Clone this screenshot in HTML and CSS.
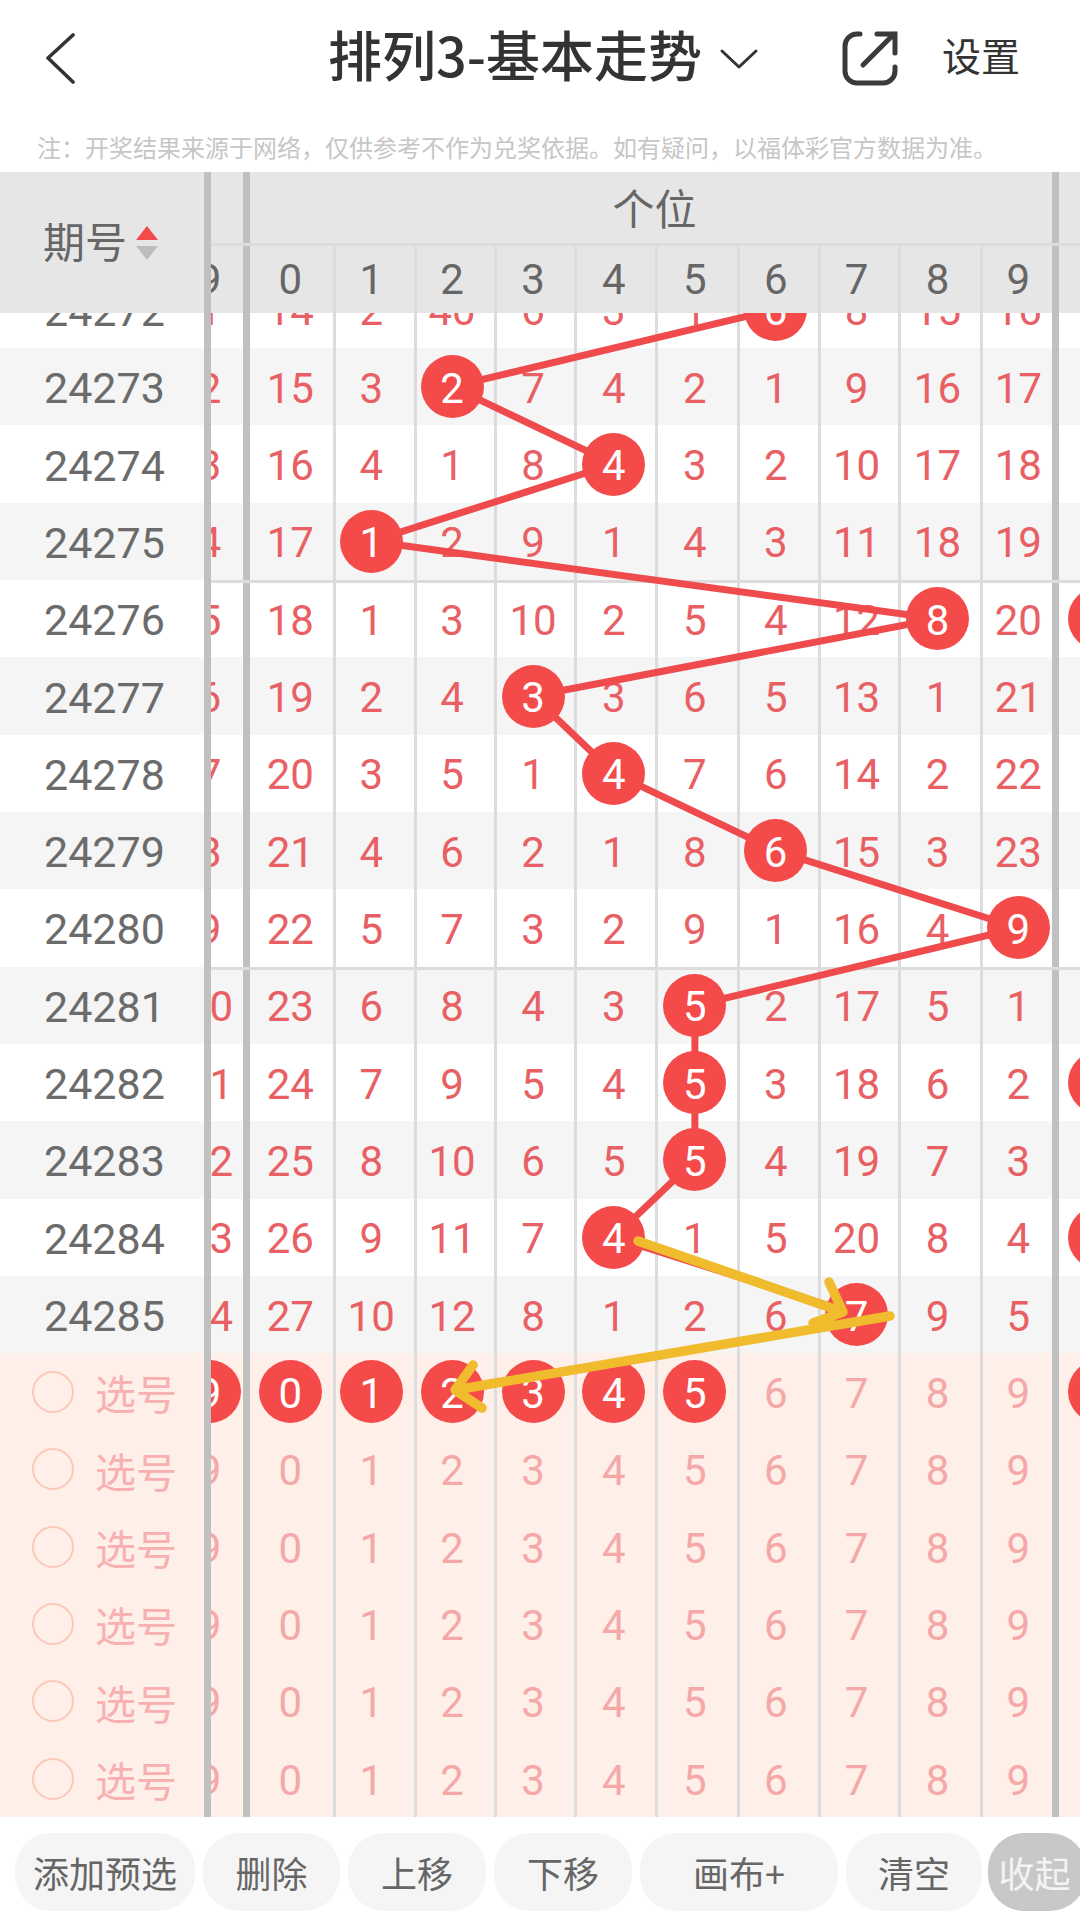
FILE: index.html
```html
<!DOCTYPE html>
<html lang="zh-CN">
<head>
<meta charset="utf-8">
<title>排列3-基本走势</title>
<link rel="stylesheet" href="styles.css">
</head>
<body>
<div class="app">
  <header class="nav">
    <svg class="icon-back" viewBox="0 0 32 52"><polyline points="29,3 4,26 29,50"/></svg>
    <h1 class="title">排列3-基本走势</h1>
    <svg class="icon-down" viewBox="0 0 40 22"><polyline points="3,3 20,19 37,3"/></svg>
    <svg class="icon-share" viewBox="0 0 60 60"><path d="M19 6H16A12 12 0 0 0 4 18V43A12 12 0 0 0 16 55H42A12 12 0 0 0 54 43V39M22 37L53 6M36 6H54V25"/></svg>
    <span class="setting">设置</span>
  </header>
  <p class="note">注：开奖结果来源于网络，仅供参考不作为兑奖依据。如有疑问，以福体彩官方数据为准。</p>

  <section class="thead">
    <div class="thead-left">
      <span class="thead-title">期号</span>
      <span class="sort"><i class="up"></i><i class="down"></i></span>
    </div>
    <div class="thead-scroll">
      <div class="group-row">
        <span class="group prev"></span>
        <span class="group main">个位</span>
        <span class="group next"></span>
      </div>
      <div class="cells head-cells">
        <span class="cell">9</span><span class="cell">0</span><span class="cell">1</span><span class="cell">2</span><span class="cell">3</span><span class="cell">4</span><span class="cell">5</span><span class="cell">6</span><span class="cell">7</span><span class="cell">8</span><span class="cell">9</span><span class="cell"></span>
      </div>
    </div>
  </section>

  <section class="tbody">
    <div class="rows">
      <div class="row"><span class="label">24272</span><div class="cells"><span class="cell">1</span><span class="cell">14</span><span class="cell">2</span><span class="cell">40</span><span class="cell">6</span><span class="cell">3</span><span class="cell">1</span><span class="cell"><b class="ball">6</b></span><span class="cell">8</span><span class="cell">15</span><span class="cell">16</span><span class="cell"></span></div></div>
      <div class="row alt"><span class="label">24273</span><div class="cells"><span class="cell">2</span><span class="cell">15</span><span class="cell">3</span><span class="cell"><b class="ball">2</b></span><span class="cell">7</span><span class="cell">4</span><span class="cell">2</span><span class="cell">1</span><span class="cell">9</span><span class="cell">16</span><span class="cell">17</span><span class="cell"></span></div></div>
      <div class="row"><span class="label">24274</span><div class="cells"><span class="cell">3</span><span class="cell">16</span><span class="cell">4</span><span class="cell">1</span><span class="cell">8</span><span class="cell"><b class="ball">4</b></span><span class="cell">3</span><span class="cell">2</span><span class="cell">10</span><span class="cell">17</span><span class="cell">18</span><span class="cell"></span></div></div>
      <div class="row alt"><span class="label">24275</span><div class="cells"><span class="cell">4</span><span class="cell">17</span><span class="cell"><b class="ball">1</b></span><span class="cell">2</span><span class="cell">9</span><span class="cell">1</span><span class="cell">4</span><span class="cell">3</span><span class="cell">11</span><span class="cell">18</span><span class="cell">19</span><span class="cell"></span></div></div>
      <div class="row rule"><span class="label">24276</span><div class="cells"><span class="cell">5</span><span class="cell">18</span><span class="cell">1</span><span class="cell">3</span><span class="cell">10</span><span class="cell">2</span><span class="cell">5</span><span class="cell">4</span><span class="cell">12</span><span class="cell"><b class="ball">8</b></span><span class="cell">20</span><span class="cell"><b class="ball">0</b></span></div></div>
      <div class="row alt"><span class="label">24277</span><div class="cells"><span class="cell">6</span><span class="cell">19</span><span class="cell">2</span><span class="cell">4</span><span class="cell"><b class="ball">3</b></span><span class="cell">3</span><span class="cell">6</span><span class="cell">5</span><span class="cell">13</span><span class="cell">1</span><span class="cell">21</span><span class="cell"></span></div></div>
      <div class="row"><span class="label">24278</span><div class="cells"><span class="cell">7</span><span class="cell">20</span><span class="cell">3</span><span class="cell">5</span><span class="cell">1</span><span class="cell"><b class="ball">4</b></span><span class="cell">7</span><span class="cell">6</span><span class="cell">14</span><span class="cell">2</span><span class="cell">22</span><span class="cell"></span></div></div>
      <div class="row alt"><span class="label">24279</span><div class="cells"><span class="cell">8</span><span class="cell">21</span><span class="cell">4</span><span class="cell">6</span><span class="cell">2</span><span class="cell">1</span><span class="cell">8</span><span class="cell"><b class="ball">6</b></span><span class="cell">15</span><span class="cell">3</span><span class="cell">23</span><span class="cell"></span></div></div>
      <div class="row"><span class="label">24280</span><div class="cells"><span class="cell">9</span><span class="cell">22</span><span class="cell">5</span><span class="cell">7</span><span class="cell">3</span><span class="cell">2</span><span class="cell">9</span><span class="cell">1</span><span class="cell">16</span><span class="cell">4</span><span class="cell"><b class="ball">9</b></span><span class="cell"></span></div></div>
      <div class="row alt rule"><span class="label">24281</span><div class="cells"><span class="cell">10</span><span class="cell">23</span><span class="cell">6</span><span class="cell">8</span><span class="cell">4</span><span class="cell">3</span><span class="cell"><b class="ball">5</b></span><span class="cell">2</span><span class="cell">17</span><span class="cell">5</span><span class="cell">1</span><span class="cell"></span></div></div>
      <div class="row"><span class="label">24282</span><div class="cells"><span class="cell">11</span><span class="cell">24</span><span class="cell">7</span><span class="cell">9</span><span class="cell">5</span><span class="cell">4</span><span class="cell"><b class="ball">5</b></span><span class="cell">3</span><span class="cell">18</span><span class="cell">6</span><span class="cell">2</span><span class="cell"><b class="ball">0</b></span></div></div>
      <div class="row alt"><span class="label">24283</span><div class="cells"><span class="cell">12</span><span class="cell">25</span><span class="cell">8</span><span class="cell">10</span><span class="cell">6</span><span class="cell">5</span><span class="cell"><b class="ball">5</b></span><span class="cell">4</span><span class="cell">19</span><span class="cell">7</span><span class="cell">3</span><span class="cell"></span></div></div>
      <div class="row"><span class="label">24284</span><div class="cells"><span class="cell">13</span><span class="cell">26</span><span class="cell">9</span><span class="cell">11</span><span class="cell">7</span><span class="cell"><b class="ball">4</b></span><span class="cell">1</span><span class="cell">5</span><span class="cell">20</span><span class="cell">8</span><span class="cell">4</span><span class="cell"><b class="ball">0</b></span></div></div>
      <div class="row alt"><span class="label">24285</span><div class="cells"><span class="cell">14</span><span class="cell">27</span><span class="cell">10</span><span class="cell">12</span><span class="cell">8</span><span class="cell">1</span><span class="cell">2</span><span class="cell">6</span><span class="cell"><b class="ball">7</b></span><span class="cell">9</span><span class="cell">5</span><span class="cell"></span></div></div>

      <div class="row pick"><span class="label"><i class="radio"></i>选号</span><div class="cells"><span class="cell"><b class="ball">9</b></span><span class="cell"><b class="ball">0</b></span><span class="cell"><b class="ball">1</b></span><span class="cell"><b class="ball">2</b></span><span class="cell"><b class="ball">3</b></span><span class="cell"><b class="ball">4</b></span><span class="cell"><b class="ball">5</b></span><span class="cell">6</span><span class="cell">7</span><span class="cell">8</span><span class="cell">9</span><span class="cell"><b class="ball">0</b></span></div></div>
      <div class="row pick"><span class="label"><i class="radio"></i>选号</span><div class="cells"><span class="cell">9</span><span class="cell">0</span><span class="cell">1</span><span class="cell">2</span><span class="cell">3</span><span class="cell">4</span><span class="cell">5</span><span class="cell">6</span><span class="cell">7</span><span class="cell">8</span><span class="cell">9</span><span class="cell"></span></div></div>
      <div class="row pick"><span class="label"><i class="radio"></i>选号</span><div class="cells"><span class="cell">9</span><span class="cell">0</span><span class="cell">1</span><span class="cell">2</span><span class="cell">3</span><span class="cell">4</span><span class="cell">5</span><span class="cell">6</span><span class="cell">7</span><span class="cell">8</span><span class="cell">9</span><span class="cell"></span></div></div>
      <div class="row pick"><span class="label"><i class="radio"></i>选号</span><div class="cells"><span class="cell">9</span><span class="cell">0</span><span class="cell">1</span><span class="cell">2</span><span class="cell">3</span><span class="cell">4</span><span class="cell">5</span><span class="cell">6</span><span class="cell">7</span><span class="cell">8</span><span class="cell">9</span><span class="cell"></span></div></div>
      <div class="row pick"><span class="label"><i class="radio"></i>选号</span><div class="cells"><span class="cell">9</span><span class="cell">0</span><span class="cell">1</span><span class="cell">2</span><span class="cell">3</span><span class="cell">4</span><span class="cell">5</span><span class="cell">6</span><span class="cell">7</span><span class="cell">8</span><span class="cell">9</span><span class="cell"></span></div></div>
      <div class="row pick"><span class="label"><i class="radio"></i>选号</span><div class="cells"><span class="cell">9</span><span class="cell">0</span><span class="cell">1</span><span class="cell">2</span><span class="cell">3</span><span class="cell">4</span><span class="cell">5</span><span class="cell">6</span><span class="cell">7</span><span class="cell">8</span><span class="cell">9</span><span class="cell"></span></div></div>
    </div>
    <svg class="trend" viewBox="0 0 1080 1505"><polyline points="775.8,-3.7 452.2,73.7 614,151 371.3,228.3 937.6,305.7 533.1,383 614,460.3 775.8,537.6 1018.5,615 694.9,692.3 694.9,769.6 694.9,847 614,924.3 856.7,1001.6"/></svg>
    <svg class="scribble" viewBox="0 0 1080 1505"><path d="M638 928L843 999M829 969L843 999L813 1010M890 1003L455 1077M473 1052L455 1077L482 1095"/></svg>
  </section>

  <footer class="toolbar">
    <span class="btn w-add">添加预选</span>
    <span class="btn w-two">删除</span>
    <span class="btn w-move">上移</span>
    <span class="btn w-move">下移</span>
    <span class="btn w-canvas">画布+</span>
    <span class="btn w-clear">清空</span>
    <span class="btn collapse">收起</span>
  </footer>
</div>
</body>
</html>
```

FILE: styles.css
```css
* { box-sizing: border-box; }
html, body { margin: 0; padding: 0; background: #fff; }
.app {
  width: 1080px;
  height: 1923px;
  overflow: hidden;
  display: flex;
  flex-direction: column;
  font-family: "Noto Sans CJK SC", "Noto Sans", sans-serif;
}

/* Nav */
.nav {
  height: 116px;
  display: flex;
  align-items: center;
  padding: 0 60px 8px 44px;
  color: #333;
}
.icon-back { width: 32px; height: 52px; flex: none; margin-top: 8px; }
.icon-back polyline, .icon-down polyline {
  fill: none; stroke: #333; stroke-width: 3.6; stroke-linecap: round; stroke-linejoin: round;
}
.icon-down polyline { stroke-width: 3; }
.title {
  margin: 0 0 0 252px;
  font-size: 54px;
  font-weight: 500;
  line-height: 1;
  white-space: nowrap;
}
.icon-down { width: 40px; height: 22px; flex: none; margin-left: 17px; margin-top: 10px; }
.icon-share { width: 60px; height: 60px; flex: none; margin-left: auto; margin-top: 8px; }
.icon-share path { fill: none; stroke: #3a3a3a; stroke-width: 5; stroke-linecap: round; stroke-linejoin: miter; }
.setting { margin-left: 41px; font-size: 39px; line-height: 1; white-space: nowrap; }

.note {
  height: 56px;
  margin: 0;
  padding-left: 37px;
  font-size: 24px;
  line-height: 62px;
  color: #c6c6c6;
  white-space: nowrap;
}

/* Table head */
.thead {
  height: 141px;
  display: flex;
  background: #e6e6e6;
  color: #666;
  flex: none;
}
.thead-left {
  width: 211px;
  flex: none;
  border-right: 7px solid #c0c0c0;
  display: flex;
  align-items: center;
  padding-left: 43px;
  gap: 9px;
  font-size: 42px;
  line-height: 1;
}
.thead-title { margin-bottom: 5px; }
.sort { display: flex; flex-direction: column; gap: 6px; margin-top: 1px; }
.sort i { display: block; width: 0; height: 0; border-left: 11px solid transparent; border-right: 11px solid transparent; }
.sort .up { border-bottom: 14px solid #f44a4a; }
.sort .down { border-top: 14px solid #bdbdbd; }
.thead-scroll { flex: 1; min-width: 0; overflow: hidden; }
.group-row {
  height: 74px;
  display: flex;
  margin-left: -42px;
  border-bottom: 3px solid #dcdcdc;
}
.group { flex: none; text-align: center; font-size: 42px; line-height: 70px; }
.group.prev { width: 81px; box-shadow: inset -7px 0 0 #c0c0c0; }
.group.main { width: 809px; box-shadow: inset -7px 0 0 #c0c0c0; }
.group.next { width: 81px; }

/* Cells */
.cells {
  flex: 1;
  min-width: 0;
  display: flex;
  margin-left: -42px;
}
.cell {
  flex: none;
  width: 80.9px;
  height: 100%;
  padding-top: 4px;
  display: flex;
  align-items: center;
  justify-content: center;
  font-family: Roboto, sans-serif;
  font-size: 42px;
  line-height: 1;
  color: #e86064;
  background: linear-gradient(to right, transparent 1.5px, #dcdcdc 1.5px, #dcdcdc 4.5px, transparent 4.5px);
}
.cell:nth-child(1), .cell:nth-child(2), .cell:nth-child(12) { background: none; }
.cell:nth-child(1) { box-shadow: inset -7px 0 0 #c0c0c0; }
.cell:nth-child(11) { box-shadow: inset -7px 0 0 #c0c0c0; }
.head-cells { height: 67px; }
.head-cells .cell { color: #666; padding-top: 0; }

/* Table body */
.tbody {
  position: relative;
  flex: none;
  height: 1505px;
  overflow: hidden;
  isolation: isolate;
}
.rows { margin-top: -42.3px; }
.row {
  position: relative;
  display: flex;
  height: 77.33px;
  background: #fff;
}
.row.alt { background: #f5f5f5; }
.row.rule::after {
  content: "";
  position: absolute;
  left: 0;
  right: 0;
  top: 0;
  height: 3px;
  background: #dcdcdc;
}
.row .cells { overflow: hidden; margin-left: 0; }
.row .cell:first-child { margin-left: -42px; }
.label {
  position: relative;
  z-index: 3;
  flex: none;
  width: 211px;
  height: 100%;
  border-right: 7px solid #c0c0c0;
  padding: 4px 0 0 44px;
  display: flex;
  align-items: center;
  font-family: Roboto, sans-serif;
  font-size: 43px;
  line-height: 1;
  color: #6b6b6b;
  background: inherit;
}
.ball {
  position: relative;
  z-index: 2;
  width: 63px;
  height: 63px;
  margin-top: -4px;
  padding-top: 4px;
  border-radius: 50%;
  background: #f44a4a;
  color: #fff;
  font-weight: 400;
  display: flex;
  align-items: center;
  justify-content: center;
}
.pick { background: #feefe9; }
.pick .label {
  font-family: "Noto Sans CJK SC", sans-serif;
  font-size: 41px;
  color: #f8b0b0;
  padding: 2px 0 0 32px;
  gap: 21px;
}
.pick .cell { color: #f5a8a8; }
.pick .ball { color: #fff; }
.radio { width: 42px; height: 42px; border: 2.5px solid #fcc8b8; border-radius: 50%; flex: none; margin-top: -2px; }

.trend, .scribble {
  position: absolute;
  left: 0;
  top: 0;
  width: 1080px;
  height: 1505px;
  pointer-events: none;
}
.trend { z-index: 1; }
.trend polyline { fill: none; stroke: #ef4a4c; stroke-width: 7; stroke-linejoin: round; }
.scribble { z-index: 4; }
.scribble path { fill: none; stroke: #f0bb2c; stroke-width: 9.5; stroke-linecap: round; stroke-linejoin: round; }

/* Toolbar */
.toolbar {
  flex: none;
  height: 105px;
  display: flex;
  gap: 8px;
  padding: 15px 0 0 15px;
}
.btn {
  flex: none;
  height: 78px;
  border-radius: 36px;
  background: #f5f5f5;
  color: #666;
  font-size: 36px;
  line-height: 1;
  display: flex;
  align-items: center;
  justify-content: center;
  white-space: nowrap;
}
.w-add { width: 180px; }
.w-two { width: 137px; }
.w-move { width: 138px; }
.w-canvas { width: 198px; }
.w-clear { width: 136px; }
.collapse { width: 98px; margin-left: -2px; padding-right: 5px; background: #c8c8c8; color: #f4f4f4; }
```
